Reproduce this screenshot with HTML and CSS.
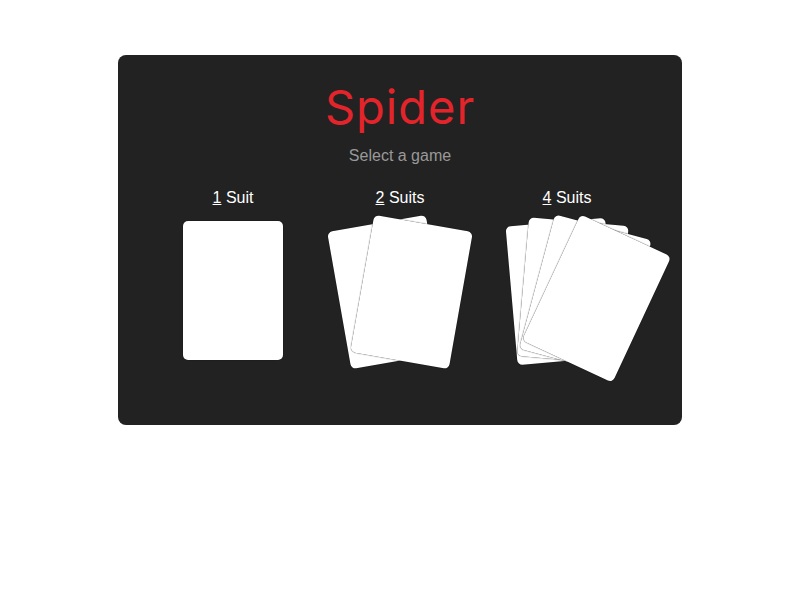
FILE: index.html
```html
<!DOCTYPE html>
<html>
<head>
    <title>Spider</title>
    <link rel="stylesheet" href="styles.css">
</head>
<body>
    <div class="panel">
        <h1 class="title">Spider</h1>
        <p class="subtitle">Select a game</p>
        <div class="games">
            <div class="game">
                <div class="game-label"><u>1</u> Suit</div>
                <div class="deck">
                    <div class="card"></div>
                </div>
            </div>
            <div class="game">
                <div class="game-label"><u>2</u> Suits</div>
                <div class="deck">
                    <div class="card two-a"></div>
                    <div class="card two-b"></div>
                </div>
            </div>
            <div class="game">
                <div class="game-label"><u>4</u> Suits</div>
                <div class="deck">
                    <div class="card four-a"></div>
                    <div class="card four-b"></div>
                    <div class="card four-c"></div>
                    <div class="card four-d"></div>
                </div>
            </div>
        </div>
    </div>
</body>
</html>
```

FILE: styles.css
```css
body {
    margin: 0;
    background-color: #fff;
    font-family: "Liberation Sans", Arial, sans-serif;
}

.panel {
    box-sizing: border-box;
    width: 564px;
    height: 370px;
    margin: 55px auto 0;
    padding-top: 21px;
    background-color: #222;
    border-radius: 8px;
    text-align: center;
}

.title {
    margin: 0;
    font-family: Inter, sans-serif;
    font-size: 47px;
    font-weight: 400;
    line-height: 62px;
    letter-spacing: 1px;
    color: #e3242b;
}

.subtitle {
    margin: 9px 0 0;
    font-size: 16px;
    line-height: 18px;
    color: #999;
}

.games {
    display: grid;
    grid-template-columns: repeat(3, 167px);
    justify-content: center;
    margin-top: 24px;
}

.game-label {
    font-size: 16px;
    line-height: 18px;
    color: #fff;
}

.deck {
    display: grid;
    justify-content: center;
    margin-top: 14px;
}

.card {
    grid-area: 1 / 1;
    width: 100px;
    height: 139px;
    background-color: #fff;
    border-radius: 5px;
    box-shadow: 0 0 1px #000;
}

.two-a {
    transform: translate(-11.5px, 1.5px) rotate(-10deg);
}

.two-b {
    transform: translate(11.5px, 1.5px) rotate(10deg);
}

.four-a {
    transform: translate(-5.6px, 1px) rotate(-5deg);
}

.four-b {
    transform: translate(5.8px, 0.5px) rotate(5deg);
}

.four-c {
    transform: translate(18.3px, 4px) rotate(15deg);
}

.four-d {
    transform: translate(29.5px, 8px) rotate(25deg);
}
```
